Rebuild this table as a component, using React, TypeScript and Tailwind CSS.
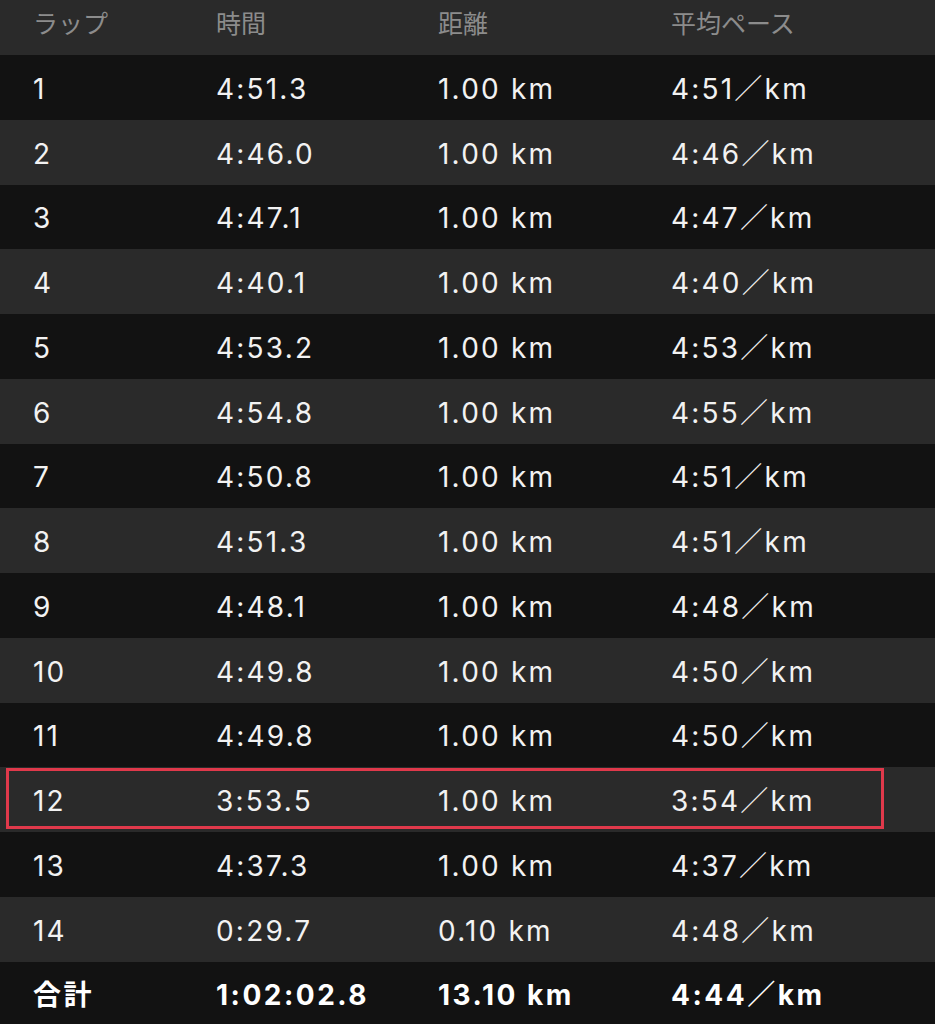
import React from "react";

const rows: [string, string, string, string][] = [
  ["1", "4:51.3", "1.00 km", "4:51／km"],
  ["2", "4:46.0", "1.00 km", "4:46／km"],
  ["3", "4:47.1", "1.00 km", "4:47／km"],
  ["4", "4:40.1", "1.00 km", "4:40／km"],
  ["5", "4:53.2", "1.00 km", "4:53／km"],
  ["6", "4:54.8", "1.00 km", "4:55／km"],
  ["7", "4:50.8", "1.00 km", "4:51／km"],
  ["8", "4:51.3", "1.00 km", "4:51／km"],
  ["9", "4:48.1", "1.00 km", "4:48／km"],
  ["10", "4:49.8", "1.00 km", "4:50／km"],
  ["11", "4:49.8", "1.00 km", "4:50／km"],
  ["12", "3:53.5", "1.00 km", "3:54／km"],
  ["13", "4:37.3", "1.00 km", "4:37／km"],
  ["14", "0:29.7", "0.10 km", "4:48／km"],
];

const font = {
  fontFamily: "Inter, 'Noto Sans CJK JP', sans-serif",
};

export default function App() {
  return (
    <div
      className="w-[935px] h-[1024px] bg-[#121212] flex flex-col overflow-hidden"
      style={font}
    >
      <div className="h-[55px] shrink-0 bg-[#2a2a2a] grid grid-cols-[183px_222px_233px_1fr] pl-[33px] items-center text-[25px] text-[#8c8c8c] pb-[6px]">
        <div>ラップ</div>
        <div>時間</div>
        <div>距離</div>
        <div>平均ペース</div>
      </div>
      {rows.map((r, i) => (
        <div
          key={i}
          className={`relative h-[64.75px] shrink-0 grid grid-cols-[183px_222px_233px_1fr] pl-[33px] pt-[3px] items-center text-[28px] tracking-[2.2px] text-[#f2f2f2] ${
            i % 2 === 0 ? "bg-[#121212]" : "bg-[#2a2a2a]"
          }`}
        >
          <div>{r[0]}</div>
          <div>{r[1]}</div>
          <div>{r[2]}</div>
          <div>{r[3]}</div>
          {i === 11 && (
            <div className="absolute left-[6px] right-[51px] top-[1px] bottom-[3px] border-[3px] border-[#e0394b]" />
          )}
        </div>
      ))}
      <div className="flex-1 bg-[#121212] grid grid-cols-[183px_222px_233px_1fr] pl-[33px] pt-[5px] items-center text-[28px] tracking-[2.5px] font-bold text-white">
        <div>合計</div>
        <div>1:02:02.8</div>
        <div>13.10 km</div>
        <div>4:44／km</div>
      </div>
    </div>
  );
}
